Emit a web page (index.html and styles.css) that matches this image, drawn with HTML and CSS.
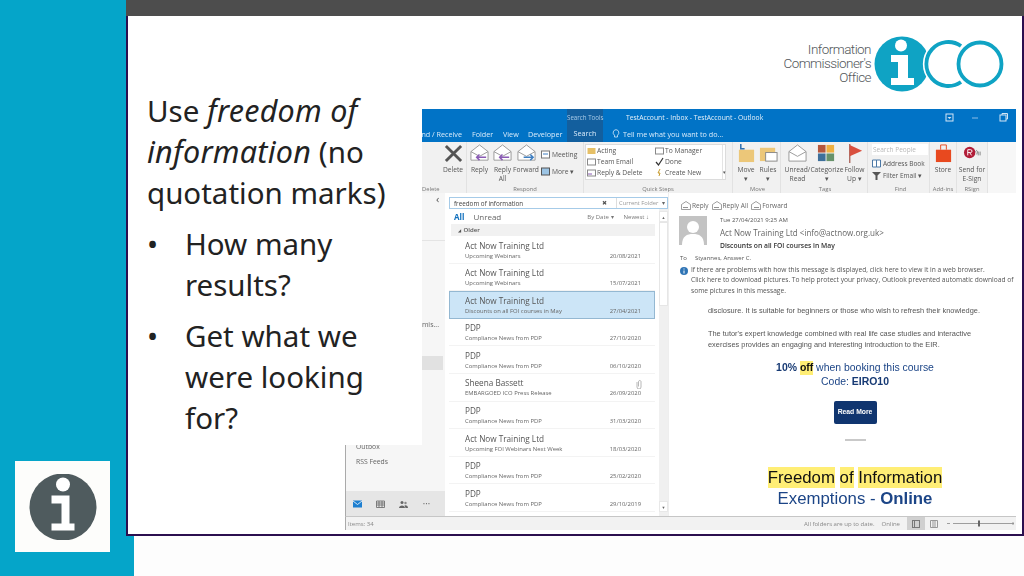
FILE: index.html
```html
<!DOCTYPE html>
<html lang="en">
<head>
<meta charset="utf-8">
<title>Use freedom of information</title>
<link rel="stylesheet" href="styles.css">
</head>
<body>
<div class="page">
  <aside class="rail">
    <div class="info-box">
      <svg class="info-icon" viewBox="0 0 68 66"><circle cx="34" cy="33" r="33.5" fill="#4f5b5e"/><circle cx="34" cy="10.5" r="7" fill="#fff"/><path d="M22.500 21.500H40.500V49.500H45.500V56.500H22.500V49.500H32.500V29.500H22.500Z" fill="#fff"/></svg>
    </div>
  </aside>
  <main class="main">
    <div class="topbar"></div>
    <div class="frame">
      <header class="logo-row">
        <div class="logo-text"><span>Information</span><span>Commissioner's</span><span>Office</span></div>
        <svg class="logo-mark" viewBox="0 0 136 60">
          <circle cx="29" cy="30" r="27.500" fill="#0fa3c4"/>
          <circle cx="28" cy="11.500" r="6" fill="#fff"/>
          <path d="M18 21H35V44H41V51H18V44H25V28H18Z" fill="#fff"/>
          <path d="M88 12A22 22 0 1 0 88 48" fill="none" stroke="#fff" stroke-width="7"/>
          <path d="M88 12A22 22 0 1 0 88 48" fill="none" stroke="#0fa3c4" stroke-width="3.800"/>
          <circle cx="107" cy="30" r="21.500" fill="none" stroke="#0fa3c4" stroke-width="3.800"/>
        </svg>
      </header>

      <section class="outlook">
        <div class="titlebar">
          <span class="tools-tab">Search Tools</span>
          <span class="window-title">TestAccount - Inbox - TestAccount - Outlook</span>
          <svg class="win-icons" viewBox="0 0 70 10"><rect x="1" y="1" width="7" height="7" fill="none" stroke="#d5e6f5"/><path d="M2.500 4H6.500L4.500 6Z" fill="#d5e6f5"/><path d="M27 5H33" stroke="#8dbde6"/><rect x="55" y="2" width="6" height="6" fill="none" stroke="#d5e6f5"/><path d="M57 2V0.5H62.500V6H61" fill="none" stroke="#d5e6f5"/></svg>
        </div>
        <nav class="tabs">
          <span class="tab tab-send">Send / Receive</span>
          <span class="tab tab-folder">Folder</span>
          <span class="tab tab-view">View</span>
          <span class="tab tab-dev">Developer</span>
          <span class="tab tab-search">Search</span>
          <svg class="bulb" viewBox="0 0 8 10"><path d="M4 .7A3 3 0 0 1 5.500 6.200V8H2.500V6.200A3 3 0 0 1 4 .7Z" fill="none" stroke="#d9ebfa" stroke-width=".8"/></svg>
          <span class="tab">Tell me what you want to do...</span>
        </nav>

        <div class="ribbon">
          <div class="group g-delete">
            <div class="tools">
              <div class="big"><svg class="i-big" viewBox="0 0 20 20"><path d="M2 2L18 18M18 2L2 18" stroke="#555" stroke-width="3"/></svg><span>Delete</span></div>
            </div>
            <div class="group-label">Delete</div>
          </div>
          <div class="group g-respond">
            <div class="tools">
              <div class="big w23"><svg class="i-big" viewBox="0 0 20 20"><path d="M1 8L10 1L19 8V17H1Z" fill="#fff" stroke="#999"/><path d="M1 8L10 13L19 8" fill="none" stroke="#999"/><path d="M17 14H7M10 11L7 14L10 17" fill="none" stroke="#8a5bb5" stroke-width="1.600"/></svg><span>Reply</span></div>
              <div class="big w23"><svg class="i-big" viewBox="0 0 20 20"><path d="M1 8L10 1L19 8V17H1Z" fill="#fff" stroke="#999"/><path d="M1 8L10 13L19 8" fill="none" stroke="#999"/><path d="M17 14H7M10 11L7 14L10 17" fill="none" stroke="#8a5bb5" stroke-width="1.600"/></svg><span>Reply<br>All</span></div>
              <div class="big w24"><svg class="i-big" viewBox="0 0 20 20"><path d="M1 8L10 1L19 8V17H1Z" fill="#fff" stroke="#999"/><path d="M1 8L10 13L19 8" fill="none" stroke="#999"/><path d="M7 14H17M14 11L17 14L14 17" fill="none" stroke="#3f7fc1" stroke-width="1.600"/></svg><span>Forward</span></div>
              <div class="stack">
                <div class="mini"><svg class="i-mini" viewBox="0 0 9 9"><rect x=".5" y="1" width="8" height="7" fill="#fff" stroke="#777"/><path d="M2 4H7" stroke="#3f7fc1"/></svg>Meeting</div>
                <div class="mini"><svg class="i-mini" viewBox="0 0 9 9"><rect x=".5" y="1" width="8" height="7" fill="#9cc4e4" stroke="#555"/></svg>More ▾</div>
              </div>
            </div>
            <div class="group-label">Respond</div>
          </div>
          <div class="group g-quick">
            <div class="tools">
              <div class="quick-box">
                <div class="quick-col">
                  <div class="qs"><svg class="i-qs" viewBox="0 0 9 9"><path d="M.5 2H8.500V8H.5Z" fill="#e6c067"/></svg>Acting</div>
                  <div class="qs"><svg class="i-qs" viewBox="0 0 9 9"><rect x=".5" y="2" width="8" height="6" fill="#fff" stroke="#888"/></svg>Team Email</div>
                  <div class="qs"><svg class="i-qs" viewBox="0 0 9 9"><rect x=".5" y="2" width="8" height="6" fill="#fff" stroke="#888"/><path d="M5 6H1" stroke="#8a5bb5"/></svg>Reply &amp; Delete</div>
                </div>
                <div class="quick-col">
                  <div class="qs"><svg class="i-qs" viewBox="0 0 9 9"><rect x=".5" y="2" width="8" height="6" fill="#fff" stroke="#888"/></svg>To Manager</div>
                  <div class="qs"><svg class="i-qs" viewBox="0 0 9 9"><path d="M1 5L3.500 8L8 1" fill="none" stroke="#333" stroke-width="1.200"/></svg>Done</div>
                  <div class="qs"><svg class="i-qs" viewBox="0 0 9 9"><path d="M5 1L3 5H5L4 8" fill="none" stroke="#c79a2a"/></svg>Create New</div>
                </div>
                <div class="quick-scroll">▾</div>
              </div>
            </div>
            <div class="group-label">Quick Steps</div>
          </div>
          <div class="group g-move">
            <div class="tools">
              <div class="big w22"><svg class="i-big" viewBox="0 0 20 20"><path d="M2 6H18V19H2Z" fill="#ecc779"/><path d="M4 0V5H8" fill="none" stroke="#2f6fb0" stroke-width="1.600"/></svg><span>Move<br>▾</span></div>
              <div class="big w22"><svg class="i-big" viewBox="0 0 20 20"><path d="M1 4H17V18H1Z" fill="#ecc779"/><rect x="7" y="9" width="12" height="9" fill="#fff" stroke="#888"/></svg><span>Rules<br>▾</span></div>
            </div>
            <div class="group-label">Move</div>
          </div>
          <div class="group g-tags">
            <div class="tools">
              <div class="big w28"><svg class="i-big" viewBox="0 0 20 20"><path d="M1 8L10 1L19 8V18H1Z" fill="#fff" stroke="#999"/><path d="M1 8L10 13L19 8" fill="none" stroke="#999"/></svg><span>Unread/<br>Read</span></div>
              <div class="big w30"><svg class="i-big" viewBox="0 0 20 20"><rect x="1" y="1" width="8" height="8" fill="#b5573d"/><rect x="10" y="1" width="8" height="8" fill="#efb041"/><rect x="1" y="10" width="8" height="8" fill="#3e6f9a"/><rect x="10" y="10" width="8" height="8" fill="#67926a"/></svg><span>Categorize<br>▾</span></div>
              <div class="big w26"><svg class="i-big" viewBox="0 0 20 20"><path d="M5 0V20" stroke="#a9635a" stroke-width="1.400"/><path d="M5 1L18 7L5 13Z" fill="#d9503f"/></svg><span>Follow<br>Up ▾</span></div>
            </div>
            <div class="group-label">Tags</div>
          </div>
          <div class="group g-find">
            <div class="find-col">
              <div class="people">Search People</div>
              <div class="mini dark"><svg class="i-mini" viewBox="0 0 9 9"><path d="M.5 1H4.500V8H.5ZM4.500 1H8.500V8H4.500Z" fill="#fff" stroke="#4b78a6"/></svg>Address Book</div>
              <div class="mini dark"><svg class="i-mini" viewBox="0 0 9 9"><path d="M0 1H9L5.500 4.500V9H3.500V4.500Z" fill="#555"/></svg>Filter Email ▾</div>
            </div>
            <div class="group-label">Find</div>
          </div>
          <div class="group g-add">
            <div class="tools">
              <div class="big w24"><svg class="i-big" viewBox="0 0 20 20"><path d="M2 6H18V19H2Z" fill="#e8491f"/><path d="M7 6V1H13V6" fill="none" stroke="#e8491f"/></svg><span>Store</span></div>
            </div>
            <div class="group-label">Add-ins</div>
          </div>
          <div class="group g-rsign">
            <div class="tools">
              <div class="big w30"><svg class="i-big" viewBox="0 0 20 20"><circle cx="7" cy="9" r="6" fill="#b11d38"/><path d="M5 12V6H8A1.500 1.500 0 0 1 8 9H5M7 9L9 12" fill="none" stroke="#fff"/><path d="M13 8C15 5 16 9 14 11M16 8V12M18 8V12" fill="none" stroke="#666" stroke-width=".8"/></svg><span>Send for<br>E-Sign</span></div>
            </div>
            <div class="group-label">RSign</div>
          </div>
        </div>

        <div class="workspace">
          <div class="folders">
            <div class="collapse">‹</div>
            <div class="folder-line"></div>
            <div class="folder-name-clip">Transmis...</div>
            <div class="folder-selected"></div>
            <div class="folder-item folder-outbox">Outbox</div>
            <div class="folder-item">RSS Feeds</div>
            <div class="nav-icons">
              <svg class="nav-icon" viewBox="0 0 9 8"><rect width="9" height="7" y=".5" fill="#1e7fd0"/><path d="M0 1L4.500 4.500L9 1" fill="none" stroke="#fff" stroke-width=".8"/></svg>
              <svg class="nav-icon" viewBox="0 0 9 8"><path d="M.5 1H8.500V7.500H.5ZM.5 3H8.500M.5 5H8.500M3 1V7.500M6 1V7.500" fill="none" stroke="#666" stroke-width=".8"/></svg>
              <svg class="nav-icon" viewBox="0 0 9 8"><circle cx="3" cy="2.500" r="1.500" fill="#666"/><circle cx="6.500" cy="3" r="1.200" fill="#888"/><path d="M0 8C0 4.500 6 4.500 6 8ZM6.500 8H9C9 5.500 6.500 5 5.500 5.500Z" fill="#666"/></svg>
              <span class="nav-dots">•••</span>
            </div>
          </div>

          <div class="list">
            <div class="searchbox">
              <span class="query">freedom of information</span>
              <span class="clear">✖</span>
              <span class="scope">Current Folder <i class="caret">▾</i></span>
            </div>
            <div class="list-body">
              <div class="list-main">
                <div class="filters">
                  <b class="all">All</b><span class="unread">Unread</span>
                  <span class="sort">By Date ▾</span><span class="sort sort-new">Newest ↓</span>
                </div>
                <div class="older"><i class="older-caret">◢</i> Older</div>
                <div class="row"><div class="from">Act Now Training Ltd</div><div class="sub"><span>Upcoming Webinars</span><span>20/08/2021</span></div></div>
                <div class="row"><div class="from">Act Now Training Ltd</div><div class="sub"><span>Upcoming Webinars</span><span>15/07/2021</span></div></div>
                <div class="row selected"><div class="from">Act Now Training Ltd</div><div class="sub"><span>Discounts on all FOI courses in May</span><span>27/04/2021</span></div></div>
                <div class="row"><div class="from">PDP</div><div class="sub"><span>Compliance News from PDP</span><span>27/10/2020</span></div></div>
                <div class="row"><div class="from">PDP</div><div class="sub"><span>Compliance News from PDP</span><span>06/10/2020</span></div></div>
                <div class="row"><div class="from">Sheena Bassett<svg class="clip" viewBox="0 0 6 10"><path d="M1 3V8A2 2 0 0 0 5 8V2.500A1.300 1.300 0 0 0 2.500 2.500V7.500" fill="none" stroke="#999" stroke-width=".7"/></svg></div><div class="sub"><span>EMBARGOED ICO Press Release</span><span>26/09/2020</span></div></div>
                <div class="row"><div class="from">PDP</div><div class="sub"><span>Compliance News from PDP</span><span>31/03/2020</span></div></div>
                <div class="row"><div class="from">Act Now Training Ltd</div><div class="sub"><span>Upcoming FOI Webinars Next Week</span><span>18/03/2020</span></div></div>
                <div class="row"><div class="from">PDP</div><div class="sub"><span>Compliance News from PDP</span><span>25/02/2020</span></div></div>
                <div class="row"><div class="from">PDP</div><div class="sub"><span>Compliance News from PDP</span><span>29/10/2019</span></div></div>
              </div>
              <div class="scrollbar">
                <div class="scroll-up">▲</div>
                <div class="scroll-thumb"></div>
                <div class="scroll-down">▼</div>
              </div>
            </div>
          </div>

          <article class="reading">
            <div class="actions">
              <span class="act"><svg class="i-act" viewBox="0 0 10 9"><path d="M.5 3.500L5 .5L9.500 3.500V8.500H.5Z" fill="#fff" stroke="#777" stroke-width=".7"/><path d="M7 6.500H2" stroke="#777" stroke-width=".8"/></svg>Reply</span>
              <span class="act"><svg class="i-act" viewBox="0 0 10 9"><path d="M.5 3.500L5 .5L9.500 3.500V8.500H.5Z" fill="#fff" stroke="#777" stroke-width=".7"/><path d="M7 6.500H2" stroke="#777" stroke-width=".8"/></svg>Reply All</span>
              <span class="act"><svg class="i-act" viewBox="0 0 10 9"><path d="M.5 3.500L5 .5L9.500 3.500V8.500H.5Z" fill="#fff" stroke="#777" stroke-width=".7"/><path d="M3 6.500H8" stroke="#777" stroke-width=".8"/></svg>Forward</span>
            </div>
            <div class="head">
              <svg class="avatar" viewBox="0 0 28 29"><rect width="28" height="29" fill="#c3c3c3"/><circle cx="14" cy="11" r="6" fill="#fff"/><path d="M3 29C3 20 8 18 14 18S25 20 25 29Z" fill="#fff"/></svg>
              <div class="head-text">
                <div class="sent">Tue 27/04/2021 9:25 AM</div>
                <div class="sender">Act Now Training Ltd &lt;info@actnow.org.uk&gt;</div>
                <div class="subject">Discounts on all FOI courses in May</div>
              </div>
            </div>
            <div class="to"><span class="to-label">To</span>Styannes, Answer C.</div>
            <div class="notice">
              <svg class="notice-i" viewBox="0 0 8 8"><circle cx="4" cy="4" r="4" fill="#2f74b5"/><path d="M4 1.500V2.500M4 3.500V6.500" stroke="#fff" stroke-width="1"/></svg>
              <p class="notice-text">If there are problems with how this message is displayed, click here to view it in a web browser.<br>Click here to download pictures. To help protect your privacy, Outlook prevented automatic download of some pictures in this message.</p>
            </div>
            <div class="mail">
              <p class="copy copy-first">disclosure. It is suitable for beginners or those who wish to refresh their knowledge.</p>
              <p class="copy">The tutor's expert knowledge combined with real life case studies and interactive<br>exercises provides an engaging and interesting introduction to the EIR.</p>
              <p class="offer"><b>10% <mark class="hit">off</mark></b> when booking this course<br>Code: <b>EIRO10</b></p>
              <div class="read-more">Read More</div>
              <div class="rule"></div>
              <p class="foi"><mark class="hit">Freedom</mark> <mark class="hit">of</mark> <mark class="hit">Information</mark><br><span class="blue">Exemptions - <b>Online</b></span></p>
            </div>
          </article>
        </div>

        <footer class="status">
          <span class="items">Items: 34</span>
          <span class="uptodate">All folders are up to date.</span>
          <span class="online">Online</span>
          <span class="view view-on"><svg class="view-i" viewBox="0 0 8 8"><rect x=".5" y=".5" width="7" height="7" fill="none" stroke="#777"/><path d="M2.500 .5V7.500" stroke="#777"/></svg></span>
          <span class="view"><svg class="view-i" viewBox="0 0 8 8"><path d="M.5 .5H7.500V7.500H.5ZM3 .5V7.500M5 .5V7.500" fill="none" stroke="#999"/></svg></span>
          <svg class="zoom" viewBox="0 0 74 9"><path d="M5 4.500H8M11 4.500H72M71 3V6" stroke="#888" stroke-width=".8" fill="none"/><rect x="36" y="1.500" width="2" height="6" fill="#666"/></svg>
        </footer>
      </section>

      <div class="slide-text">
        <p class="lead">Use <em class="term">freedom of information</em> (no quotation marks)</p>
        <ul class="points">
          <li>How many results?</li>
          <li>Get what we were looking for?</li>
        </ul>
      </div>
    </div>
  </main>
</div>
</body>
</html>
```

FILE: styles.css
```css
* { box-sizing: border-box; }
html, body { margin: 0; padding: 0; }
body { width: 1024px; height: 576px; overflow: hidden; background: #fdfdfd; font-family: "Open Sans", sans-serif; }
p { margin: 0; }
.page { display: flex; width: 1024px; height: 576px; }

.rail { flex: 0 0 134px; background: #05a5c9; padding: 461px 0 0 15px; }
.info-box { width: 95px; height: 91px; background: #fdfdfb; display: flex; align-items: center; justify-content: center; }
.info-icon { width: 68px; height: 66px; }

.main { flex: 0 0 898px; margin-left: -8px; }
.topbar { height: 16px; background: #4d4d4d; }
.frame { position: relative; height: 520px; width: 898px; background: #fff; border: 2px solid #2b0f4f; border-top: 0; padding-top: 2px; }

.logo-row { height: 91px; display: flex; align-items: flex-start; justify-content: flex-end; padding: 17px 13px 0 0; gap: 2px; }
.logo-text { display: flex; flex-direction: column; align-items: flex-end; padding-top: 7px; font: 13.500px/14px Roboto, sans-serif; font-weight: 300; letter-spacing: -.55px; color: #53575b; }
.logo-mark { width: 136px; height: 60px; margin-top: -1px; }

.outlook { margin-left: 217px; width: 671px; height: 421px; display: flex; flex-direction: column; filter: blur(.45px); background: #fff; }

.titlebar { position: relative; height: 16px; background: #0173c6; color: #d6e8f7; font-size: 7px; line-height: 18px; flex: none; }
.tools-tab { position: absolute; left: 222px; top: 0; width: 36px; height: 16px; background: #135f9e; text-align: center; font-size: 6.200px; color: #a9cbe8; white-space: nowrap; }
.window-title { position: absolute; left: 281px; top: 0; white-space: nowrap; font-size: 6.750px; color: #e6f1fa; }
.win-icons { position: absolute; left: 600px; top: 4px; width: 70px; height: 10px; }

.tabs { display: flex; align-items: center; height: 17px; background: #0173c6; color: #d9ebfa; font-size: 7.200px; flex: none; white-space: nowrap; }
.tab-send { width: 127px; padding-right: 10px; text-align: right; }
.tab-folder { width: 31px; }
.tab-view { width: 25px; }
.tab-dev { width: 39px; }
.tab-search { width: 36px; height: 17px; line-height: 17px; background: #135f9e; text-align: center; margin-right: 9px; }
.bulb { width: 8px; height: 10px; margin-right: 3px; }

.ribbon { display: flex; height: 51px; background: #f7f7f7; flex: none; padding-left: 77px; font-size: 6.700px; color: #555; }
.group { position: relative; display: flex; flex-direction: column; border-right: 1px solid #e2e2e2; flex: none; background: #f1f1f1; }
.tools { display: flex; flex: 1; padding-top: 2px; align-items: flex-start; }
.group-label { height: 10px; line-height: 12px; text-align: center; font-size: 5.800px; color: #777; flex: none; }
.g-delete { width: 45px; align-items: flex-end; }
.g-delete .group-label { width: 100%; text-align: left; }
.g-delete .tools { padding-right: 2px; }
.g-delete .big { width: 22px; }
.g-respond { width: 117px; }
.g-respond .tools { padding-left: 1px; }
.g-quick { width: 149px; }
.g-move { width: 48px; padding-left: 2px; }
.g-tags { width: 87px; padding-left: 2px; }
.g-find { width: 62px; padding-left: 4px; }
.g-add { width: 27px; align-items: center; }
.g-rsign { width: 31px; }
.big { display: flex; flex-direction: column; align-items: center; text-align: center; line-height: 9px; }
.big span { margin-top: 0; }
.w22 { width: 22px; } .w23 { width: 23px; } .w24 { width: 24px; } .w26 { width: 26px; } .w28 { width: 30px; } .w30 { width: 30px; }
.i-big { width: 19px; height: 19px; margin-bottom: 2px; }
.stack { display: flex; flex-direction: column; gap: 8px; padding: 6px 0 0 3px; }
.mini { display: flex; align-items: center; gap: 2px; white-space: nowrap; line-height: 9px; }
.mini.dark { font-size: 6.500px; }
.i-mini { width: 9px; height: 9px; }
.quick-box { display: flex; margin: 0 0 0 1px; width: 141px; height: 36px; background: #fff; border: 1px solid #dcdcdc; position: relative; }
.quick-col { flex: none; width: 68px; display: flex; flex-direction: column; padding: 1px 0 0 1px; gap: 2px; }
.qs { display: flex; align-items: center; gap: 1px; line-height: 9px; white-space: nowrap; }
.i-qs { width: 9px; height: 9px; flex: none; }
.quick-scroll { flex: 1; border-left: 1px solid #e4e4e4; font-size: 5px; text-align: center; padding-top: 24px; }
.find-col { flex: 1; display: flex; flex-direction: column; gap: 3px; padding-top: 2px; }
.people { width: 56px; height: 11px; background: #fff; color: #b8b8b8; font-size: 6.500px; line-height: 11px; padding-left: 1px; margin-bottom: 1px; }

.workspace { flex: 1; display: flex; min-height: 0; background: #fff; }
.folders { position: relative; width: 100px; flex: none; background: #f6f6f6; border-left: 1px solid #aaa; display: flex; flex-direction: column; font-size: 6.800px; color: #666; }
.collapse { position: absolute; left: 90px; top: 0; font-size: 11px; line-height: 11px; color: #555; }
.folder-line { position: absolute; left: 0; right: 0; top: 47px; height: 1px; background: #e4e4e4; }
.folder-name-clip { position: absolute; right: 6px; top: 127px; line-height: 10px; font-size: 7px; }
.folder-selected { position: absolute; left: 0; right: 2px; top: 163px; height: 14px; background: #e1e1e1; }
.folder-item { padding-left: 10px; line-height: 15px; }
.folder-outbox { margin-top: 246px; }
.nav-icons { margin-top: auto; height: 25px; background: #e6e6e6; display: flex; align-items: center; padding-left: 7px; gap: 14px; }
.nav-icon { width: 9px; height: 8px; }
.nav-dots { font-size: 5px; letter-spacing: .6px; color: #666; margin-left: 1px; }

.list { width: 223px; flex: none; display: flex; flex-direction: column; padding: 4px 0 0 4px; }
.searchbox { display: flex; align-items: center; height: 12px; width: 219px; border: 1px solid #a6cbe8; font-size: 6.300px; color: #444; flex: none; padding-left: 4px; }
.query { width: 148px; }
.clear { width: 14px; font-size: 6px; color: #555; }
.scope { flex: 1; border-left: 1px solid #ddd; color: #999; white-space: nowrap; padding-left: 2px; font-size: 5.800px; line-height: 10px; }
.caret { font-style: normal; margin-left: 2px; color: #666; }
.list-body { display: flex; flex: 1; min-height: 0; }
.list-main { width: 206px; flex: none; display: flex; flex-direction: column; }
.filters { display: flex; align-items: center; height: 15px; padding-left: 5px; font-size: 8px; color: #666; flex: none; }
.all { color: #1170bd; margin-right: 9px; }
.unread { flex: 1; }
.sort { font-size: 6px; color: #777; }
.sort-new { margin: 0 6px 0 10px; }
.older { height: 12px; background: #f1f1f1; margin-left: 2px; font-size: 6px; font-weight: 600; line-height: 12px; padding-left: 7px; color: #555; flex: none; }
.older-caret { font-style: normal; font-size: 4px; margin-right: 1px; }
.row { height: 27.600px; flex: none; padding: 3.500px 14px 0 16px; border-bottom: 1px solid #f3f3f3; color: #555; }
.from { position: relative; font-size: 8.200px; line-height: 11px; color: #555; }
.clip { position: absolute; right: -1px; top: 2px; width: 6px; height: 10px; }
.sub { display: flex; justify-content: space-between; font-size: 5.900px; line-height: 9px; margin-top: 1px; color: #666; }
.selected { background: #cce5f7; border: 1px solid #94b8d2; padding: 2.500px 13px 0 15px; }
.scrollbar { width: 9px; margin-left: 4px; background: #f0f0f0; display: flex; flex-direction: column; font-size: 4px; color: #666; text-align: center; }
.scroll-up { height: 11px; background: #fff; line-height: 11px; border: 1px solid #e8e8e8; margin-top: 2px; }
.scroll-thumb { height: 84px; background: #fff; border: 1px solid #e6e6e6; }
.scroll-down { margin-top: auto; height: 11px; background: #fff; line-height: 11px; border: 1px solid #e8e8e8; margin-bottom: 4px; }

.reading { flex: 1; padding: 7px 0 0 12px; min-width: 0; border-left: 1px solid #eee; color: #555; overflow: hidden; }
.actions { display: flex; gap: 3px; font-size: 6.500px; line-height: 10px; color: #666; height: 11px; }
.act { display: flex; align-items: center; gap: 1px; }
.i-act { width: 10px; height: 9px; }
.head { display: flex; margin: 5px 0 0 -2px; }
.avatar { width: 28px; height: 29px; flex: none; }
.head-text { margin-left: 13px; }
.sent { font-size: 6px; line-height: 9px; }
.sender { font-size: 8.050px; line-height: 13px; margin-top: 1px; color: #666; white-space: nowrap; }
.subject { font-size: 6.750px; line-height: 10px; margin-top: 2px; color: #333; font-weight: 600; }
.to { font-size: 6px; line-height: 9px; margin-top: 3px; margin-left: -1px; }
.to-label { margin-right: 8px; }
.notice { display: flex; margin: 1.500px 0 0 -1px; }
.notice-i { width: 8px; height: 8px; flex: none; margin: 2px 3px 0 0; }
.notice-text { font-size: 6.650px; line-height: 10.500px; width: 326px; }
.mail { font-family: "Liberation Sans", sans-serif; width: 294px; margin-left: 27px; padding-top: 9px; text-align: center; }
.copy { text-align: left; font-size: 7.400px; line-height: 11.500px; color: #555; white-space: nowrap; }
.copy-first { margin-bottom: 11px; }
.offer { font-size: 10.450px; line-height: 14.500px; color: #1c4587; margin-top: 10px; white-space: nowrap; }
.hit { display: inline-block; background: #ffee75; color: #111; }
.offer b { color: #173a74; }
.read-more { width: 43px; height: 23px; margin: 11px auto 0; background: #10356f; border-radius: 2px; color: #fff; font-size: 6.800px; font-weight: 700; line-height: 22px; }
.rule { width: 21px; height: 2px; background: #c9c9c9; margin: 15px auto 0; }
.foi { margin-top: 26.500px; font-size: 16.800px; line-height: 21px; color: #111; white-space: nowrap; }
.blue { color: #1c4587; }

.status { display: flex; align-items: center; height: 14px; background: #f2f2f2; border-top: 1px solid #c6c6c6; border-left: 1px solid #aaa; font-size: 6px; color: #888; flex: none; }
.items { padding-left: 2px; margin-right: auto; }
.online { margin: 0 7px 0 7px; }
.view { width: 18px; height: 13px; display: flex; align-items: center; justify-content: center; }
.view-on { background: #d0d0d0; }
.view-i { width: 8px; height: 8px; }
.zoom { width: 74px; height: 9px; margin-left: -1px; }

.slide-text { position: absolute; left: 0; top: 2px; width: 294px; height: 427px; background: #fff; padding: 72px 0 0 19px; font-family: "Noto Sans", sans-serif; font-size: 29.500px; line-height: 41px; color: #222; }
.term { font-size: 30.500px; letter-spacing: .25px; }
.lead { width: 250px; margin-bottom: 10px; }
.points { margin: 0; padding: 0 0 0 38px; width: 230px; list-style: none; }
.points li { margin-bottom: 10px; }
.points li::before { content: "•"; display: inline-block; width: 38px; margin-left: -38px; }
```
